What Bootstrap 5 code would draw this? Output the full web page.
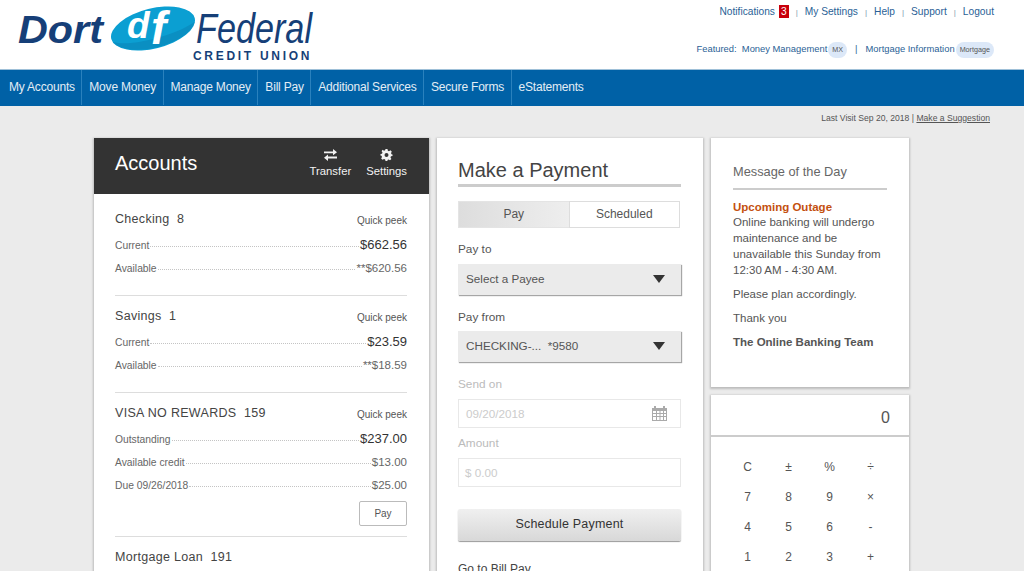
<!DOCTYPE html>
<html lang="en">
<head>
<meta charset="utf-8">
<title>Dort Federal Credit Union</title>
<link href="https://cdn.jsdelivr.net/npm/bootstrap@5.3.0/dist/css/bootstrap.min.css" rel="stylesheet">
<style>
html,body{height:571px;overflow:hidden}
body{background:#ebebeb;font-family:"Liberation Sans",Arial,sans-serif;color:#555;font-size:12px}
.site-head{height:69px;background:#fff}
.logo-svg{display:block;margin:0 0 0 17px}
.head-links{width:340px;padding-right:30px;color:#1f5c99;font-size:10.2px;white-space:nowrap}
.top-line{margin-top:4px;height:14px}
.top-line a,.feat-line a{color:#2a5f96;text-decoration:none}
.top-line i{font-style:normal;color:#7d96ad;font-size:8px;margin:0 7px}
.note-count{background:#c8000b;color:#fff;padding:0 2px;margin-left:4px;display:inline-block;line-height:13px}
.feat-line{margin-top:22px;height:18px;font-size:9.4px;line-height:18px}
.pill-tag{background:#dce8f8;color:#555;border-radius:8px;padding:0 4px;margin-left:1px;font-size:7.2px;line-height:16px;height:16px;display:inline-block;vertical-align:middle}
.feat-sep{margin:0 8px;color:#2a5f96}
.main-nav{height:37px;background:#0061a6;border-top:1px solid #9fc0d8;border-bottom:1px solid #0061a6}
.main-nav .nav-link{color:#e3edf5;font-size:12px;height:35px;line-height:35px;padding:0 6.500px 0 7px;border-right:1px solid #2a81bd;letter-spacing:-.2px}
.main-nav .nav-link:first-child{padding-left:9px}
.main-nav .nav-link:last-child{border:0}
.sub-line{height:32px;padding:7px 34px 0 0;font-size:8.6px;color:#555;line-height:11px}
.sub-line a{color:#555}
.page-cols{padding-left:94px;gap:8px}
.panel-box{background:#fff;border:0;border-radius:0;box-shadow:0 1px 2px 1px rgba(0,0,0,.2)}
.col-acc{width:335px}
.col-pay{width:266px}
.col-side{width:198px}
.acc-head{height:56px;background:#333;color:#fff;padding:0 22px 0 21px}
.acc-title{font-size:20px;margin:0 0 6px;font-weight:400}
.acc-tools{gap:15px}
.acc-tool{font-size:11.300px;color:#f2f2f2;line-height:14px;text-align:center;margin-top:-6px}
.acc-tool svg{display:block;margin:0 auto 3px}
.acc-body{padding:0 22px 0 21px}
.acc-group{border-bottom:1px solid #ddd;padding-top:12px;height:97px;margin:0}
.acc-group.g-first{height:102px;padding-top:17px}
.acc-group.g-tall{height:144px}
.acc-group.g-open{border:0}
.acc-name{font-size:12.5px;color:#444;letter-spacing:.3px;line-height:16px;margin-bottom:2px}
.acc-peek{font-size:10px;color:#555;line-height:16px;padding-top:2px}
.acc-row{height:23px;font-size:10.300px;color:#666;align-items:flex-end;line-height:14px}
.acc-row>span:first-child{margin-bottom:-1px}
.acc-row .dots{flex:1;border-bottom:1px dotted #c4c4c4;margin:0 1px 5px}
.acc-row b{font-weight:400;font-size:11.5px;color:#666}
.acc-row b.big{font-size:13px;color:#333}
.pay-small{width:48px;height:25px;font-size:10px;padding:0;border:1px solid #bbb;border-radius:2px;color:#555;margin-top:9px}
.pay-inner{padding:0 22px 0 21px;height:433px;overflow:hidden}
.pay-title{font-size:20px;font-weight:400;color:#444;border-bottom:3px solid #ccc;margin:20px 0 14px;padding-bottom:1px;line-height:25px}
.tab-pair{height:27px}
.tab-pair .btn{font-size:12px;color:#555;border:1px solid #ddd;border-radius:0;padding:0;line-height:25px;flex:0 0 50%;width:50%}
.tab-pair .btn.tab-on{background:linear-gradient(90deg,#ddd,#eee);border-color:#e4e4e4}
.field-lab{font-size:11.8px;color:#555;line-height:14px;margin:14px 0 8px}
.field-lab.low{margin:15px 0 7px}
.field-lab.off{color:#bbb;margin:15px 0 8px}
.field-lab.off.tight{margin-top:8px}
.pick-btn{width:100%;height:31px;background:#ebebeb;border:0;border-radius:0;box-shadow:1px 1px 1px 0 rgba(0,0,0,.35);font-size:11.7px;color:#555;padding:0 16px 1px 8px;align-items:center}
.off-input{height:29px;border:1px solid #e8e8e8;border-radius:0;color:#ccc;font-size:11.7px;padding:0 13px 0 7px;background:#fff;align-items:center}
.off-input.cash{padding-left:6px}
.sched-btn{width:100%;height:32px;margin-top:22px;background:linear-gradient(#f0f0f0,#d8d8d8);border:0;border-radius:2px;box-shadow:0 1px 1px rgba(0,0,0,.4);color:#333;font-size:12.5px;letter-spacing:.2px;padding:0 0 2px}
.bill-link{display:block;margin-top:19px;color:#444;font-size:12px;text-decoration:none}
.msg-box{height:249px;padding:0 22px}
.msg-title{font-size:12.8px;font-weight:400;color:#666;border-bottom:2px solid #ccc;margin:26px 0 9px;padding-bottom:8px;line-height:16px}
.msg-box p{font-size:11.5px;line-height:16px;margin:0 0 8px;color:#555}
.msg-alert{display:block;font-weight:700;color:#c4500f;margin-bottom:-1px}
.calc-box{margin-top:8px;height:200px}
.calc-screen{height:42px;border-bottom:2px solid #ccc;text-align:right;padding:13px 19px 0 0;font-size:16px;color:#555;line-height:20px}
.calc-keys{display:grid;grid-template-columns:repeat(4,41px);grid-auto-rows:30px;padding:15px 0 0 16px;justify-items:center;font-size:12px;color:#555;line-height:30px}
</style>
</head>
<body>
<header class="site-head d-flex justify-content-between">
  <svg class="logo-svg" width="298" height="65" viewBox="0 -5 298 65" role="img" aria-label="Dort df Federal Credit Union">
    <text x="1" y="38" font-family="Liberation Sans" font-style="italic" font-weight="700" font-size="38" fill="#163f78" textLength="85" lengthAdjust="spacingAndGlyphs">Dort</text>
    <g transform="rotate(-14 136 23.500)">
      <ellipse cx="136" cy="23.500" rx="43" ry="20" fill="#0b9fd2"/>
      <path d="M94 27a43 20 0 0 0 84 0c-18 8-66 10-84 0z" fill="#0a8fc2"/>
    </g>
    <text x="110" y="33" font-family="Liberation Sans" font-style="italic" font-weight="700" font-size="37" fill="#fff">d</text>
    <text x="134" y="39" font-family="Liberation Sans" font-style="italic" font-weight="700" font-size="46" fill="#fff">f</text>
    <text x="179" y="38" font-family="Liberation Sans" font-style="italic" font-size="42" fill="#163f78" textLength="116" lengthAdjust="spacingAndGlyphs">Federal</text>
    <text x="176" y="55" font-family="Liberation Sans" font-weight="700" font-size="12" fill="#163f78" letter-spacing="2.700">CREDIT UNION</text>
  </svg>
  <div class="head-links text-end">
    <div class="top-line"><a href="#">Notifications</a><span class="note-count">3</span><i>|</i><a href="#">My Settings</a><i>|</i><a href="#">Help</a><i>|</i><a href="#">Support</a><i>|</i><a href="#">Logout</a></div>
    <div class="feat-line"><a href="#">Featured:&nbsp; Money Management</a><span class="pill-tag">MX</span><span class="feat-sep">|</span><a href="#">Mortgage Information</a><span class="pill-tag">Mortgage</span></div>
  </div>
</header>
<nav class="main-nav nav">
  <a class="nav-link" href="#">My Accounts</a>
  <a class="nav-link" href="#">Move Money</a>
  <a class="nav-link" href="#">Manage Money</a>
  <a class="nav-link" href="#">Bill Pay</a>
  <a class="nav-link" href="#">Additional Services</a>
  <a class="nav-link" href="#">Secure Forms</a>
  <a class="nav-link" href="#">eStatements</a>
</nav>
<div class="sub-line text-end">Last Visit Sep 20, 2018 | <a href="#">Make a Suggestion</a></div>
<main class="page-cols d-flex align-items-start">
  <section class="col-acc panel-box card">
    <div class="acc-head d-flex justify-content-between align-items-center">
      <h2 class="acc-title">Accounts</h2>
      <div class="d-flex acc-tools">
        <div class="acc-tool">
          <svg width="13" height="12" viewBox="0 0 13 12" fill="#f2f2f2"><path d="M0 2.400h9V0l4 3.300-4 3V4.300H0zM13 7.400H4V5.500L0 8.800 4 12V9.400h9z"/></svg>
          Transfer
        </div>
        <div class="acc-tool">
          <svg width="13" height="12" viewBox="0 0 24 24" fill="#f2f2f2"><path fill-rule="evenodd" d="M10 0h4l.7 3.300 2.300 1 2.900-1.800 2.800 2.800L21 8.100l1 2.300 2 .6v3l-3 .7-1 2.300 1.800 2.900-2.800 2.800-2.900-1.800-2.300 1L14 24h-4l-.7-3.100-2.300-1-2.900 1.800-2.800-2.800L3 16l-1-2.300-2-.7v-3l3-.6 1-2.300-1.800-2.800L4.100 1.500 7 3.300l2.300-1zM12 8a4 4 0 1 0 0 8 4 4 0 0 0 0-8z"/></svg>
          Settings
        </div>
      </div>
    </div>
    <div class="acc-body">
      <div class="acc-group g-first">
        <div class="d-flex justify-content-between"><div class="acc-name">Checking&nbsp; 8</div><div class="acc-peek">Quick peek</div></div>
        <div class="acc-row d-flex"><span>Current</span><span class="dots"></span><b class="big">$662.56</b></div>
        <div class="acc-row d-flex"><span>Available</span><span class="dots"></span><b>**$620.56</b></div>
      </div>
      <div class="acc-group">
        <div class="d-flex justify-content-between"><div class="acc-name">Savings&nbsp; 1</div><div class="acc-peek">Quick peek</div></div>
        <div class="acc-row d-flex"><span>Current</span><span class="dots"></span><b class="big">$23.59</b></div>
        <div class="acc-row d-flex"><span>Available</span><span class="dots"></span><b>**$18.59</b></div>
      </div>
      <div class="acc-group g-tall">
        <div class="d-flex justify-content-between"><div class="acc-name">VISA NO REWARDS&nbsp; 159</div><div class="acc-peek">Quick peek</div></div>
        <div class="acc-row d-flex"><span>Outstanding</span><span class="dots"></span><b class="big">$237.00</b></div>
        <div class="acc-row d-flex"><span>Available credit</span><span class="dots"></span><b>$13.00</b></div>
        <div class="acc-row d-flex"><span>Due 09/26/2018</span><span class="dots"></span><b>$25.00</b></div>
        <div class="text-end"><button class="btn pay-small" type="button">Pay</button></div>
      </div>
      <div class="acc-group g-open">
        <div class="acc-name">Mortgage Loan&nbsp; 191</div>
      </div>
    </div>
  </section>
  <section class="col-pay panel-box card">
    <div class="pay-inner">
      <h2 class="pay-title">Make a Payment</h2>
      <div class="btn-group tab-pair w-100">
        <button class="btn tab-on" type="button">Pay</button>
        <button class="btn" type="button">Scheduled</button>
      </div>
      <div class="field-lab">Pay to</div>
      <button class="btn pick-btn d-flex justify-content-between" type="button">Select a Payee<svg width="12" height="8" viewBox="0 0 12 8"><path d="M0 0h12L6 8z" fill="#333"/></svg></button>
      <div class="field-lab low">Pay from</div>
      <button class="btn pick-btn d-flex justify-content-between" type="button">CHECKING-...&nbsp; *9580<svg width="12" height="8" viewBox="0 0 12 8"><path d="M0 0h12L6 8z" fill="#333"/></svg></button>
      <div class="field-lab off">Send on</div>
      <div class="off-input d-flex justify-content-between">09/20/2018
        <svg width="15" height="15" viewBox="0 0 15 15" fill="#aaa"><path fill-rule="evenodd" d="M0 2h2V0h2v2h7V0h2v2h2v13H0zM1 5v2h3V5zm4 0v2h2.500V5zm3.500 0v2H11V5zM12 5v2h2V5zM1 8v2h3V8zm4 0v2h2.500V8zm3.500 0v2H11V8zM12 8v2h2V8zM1 11v3h3v-3zm4 0v3h2.500v-3zm3.500 0v3H11v-3zm3.500 0v3h2v-3z"/></svg>
      </div>
      <div class="field-lab off tight">Amount</div>
      <div class="off-input cash d-flex">$ 0.00</div>
      <button class="btn sched-btn" type="button">Schedule Payment</button>
      <a class="bill-link" href="#">Go to Bill Pay</a>
    </div>
  </section>
  <aside class="col-side">
    <section class="panel-box card msg-box">
      <h3 class="msg-title">Message of the Day</h3>
      <p><span class="msg-alert">Upcoming Outage</span>Online banking will undergo maintenance and be unavailable this Sunday from 12:30 AM - 4:30 AM.</p>
      <p>Please plan accordingly.</p>
      <p>Thank you</p>
      <p><strong>The Online Banking Team</strong></p>
    </section>
    <section class="panel-box card calc-box">
      <div class="calc-screen">0</div>
      <div class="calc-keys">
        <span>C</span><span>±</span><span>%</span><span>÷</span>
        <span>7</span><span>8</span><span>9</span><span>×</span>
        <span>4</span><span>5</span><span>6</span><span>-</span>
        <span>1</span><span>2</span><span>3</span><span>+</span>
      </div>
    </section>
  </aside>
</main>
<script src="https://cdn.jsdelivr.net/npm/bootstrap@5.3.0/dist/js/bootstrap.bundle.min.js"></script>
</body>
</html>
